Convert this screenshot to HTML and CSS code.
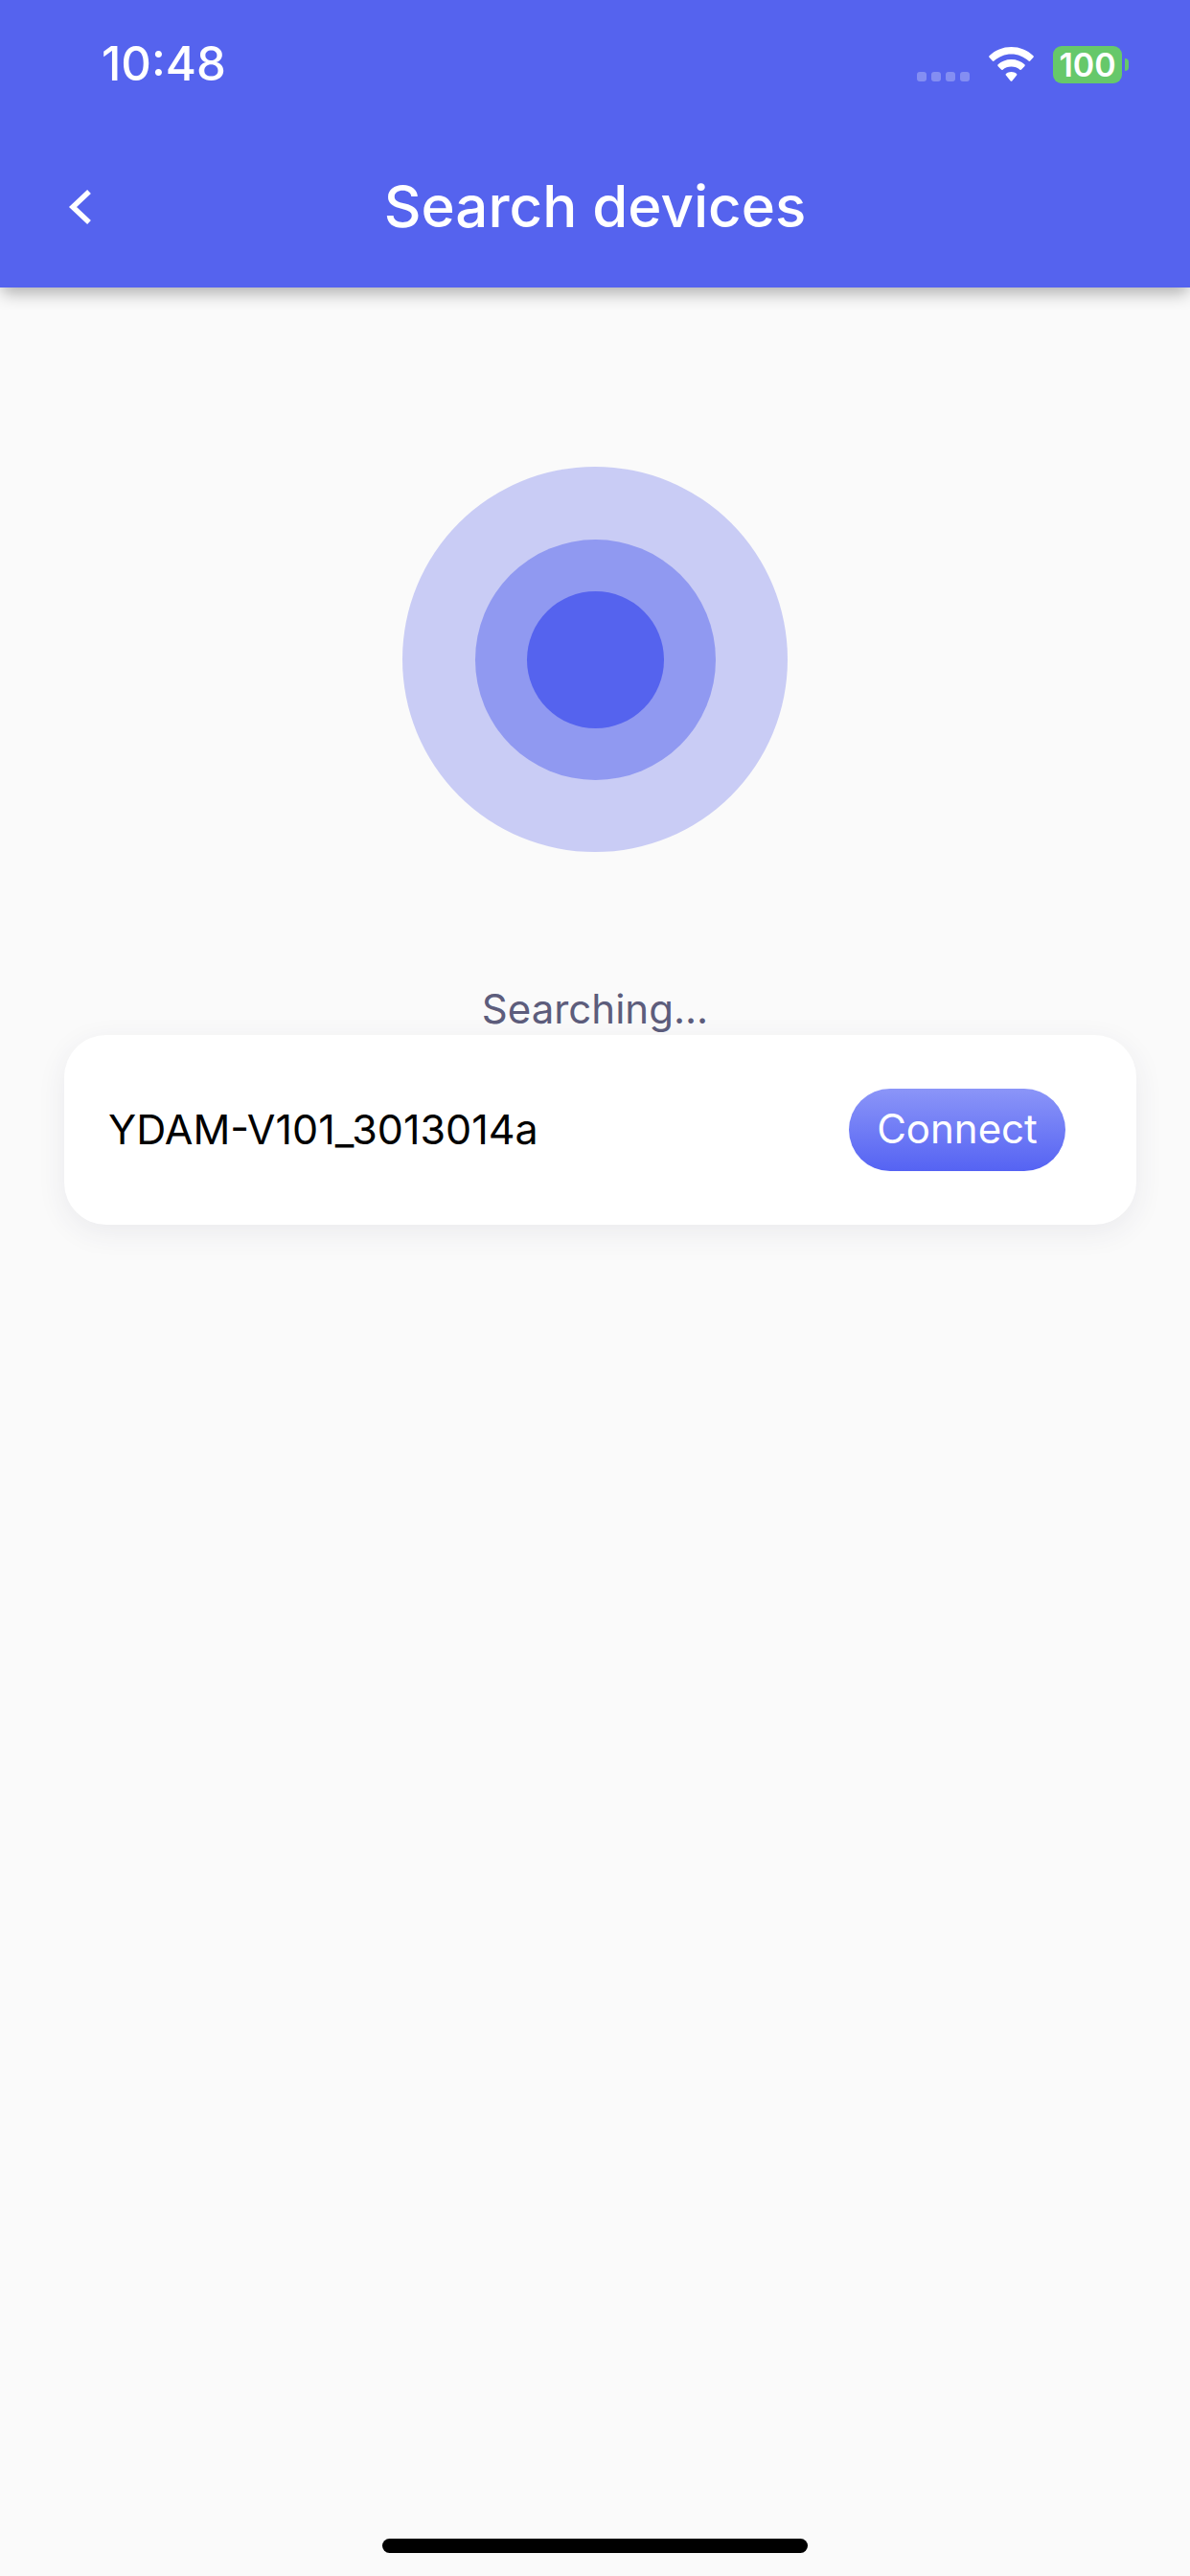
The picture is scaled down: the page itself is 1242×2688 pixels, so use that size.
FILE: index.html
```html
<!DOCTYPE html>
<html lang="en">
<head>
<meta charset="utf-8">
<title>Search devices</title>
<link rel="stylesheet" href="styles.css">
</head>
<body>
<div class="page">
  <header class="header">
    <div class="status-bar">
      <span class="time">10:48</span>
      <div class="status-icons">
        <div class="signal"><i></i><i></i><i></i><i></i></div>
        <svg class="wifi" width="47" height="36" viewBox="0 0 47 36">
          <path fill="#fff" d="M23.5 0C14.5 0 6.6 3.400 0.500 9.200C0 9.700 0 10.300 0.400 10.800L3.800 14.500C4.300 15 5 15 5.500 14.600C10.300 10.100 16.600 7.400 23.500 7.400C30.400 7.400 36.700 10.100 41.500 14.600C42 15 42.700 15 43.200 14.500L46.600 10.800C47 10.300 47 9.700 46.500 9.200C40.400 3.400 32.500 0 23.500 0Z"/>
          <path fill="#fff" d="M23.500 13C18.100 13 13.300 15 9.600 18.300C9.100 18.800 9.100 19.400 9.500 19.900L12.900 23.600C13.400 24.100 14.100 24.100 14.600 23.700C17 21.700 20.100 20.500 23.500 20.500C26.900 20.500 30 21.700 32.400 23.700C32.900 24.100 33.600 24.100 34.100 23.600L37.500 19.900C37.900 19.400 37.900 18.800 37.400 18.300C33.700 15 28.900 13 23.500 13Z"/>
          <path fill="#fff" d="M23.500 26C21.400 26 19.500 26.700 18 27.900C17.500 28.300 17.500 29 17.900 29.500L22.700 35.400C23.100 35.900 23.900 35.900 24.300 35.400L29.100 29.500C29.500 29 29.500 28.300 29 27.900C27.500 26.700 25.600 26 23.500 26Z"/>
        </svg>
        <div class="battery">
          <span class="battery-body">100</span>
          <span class="battery-nub"></span>
        </div>
      </div>
    </div>
    <div class="nav-bar">
      <svg class="back" width="28" height="40" viewBox="0 0 28 40">
        <path d="M24 4L7 20L24 36" fill="none" stroke="#fff" stroke-width="5.500"/>
      </svg>
      <h1 class="title">Search devices</h1>
    </div>
  </header>

  <main class="content">
    <div class="radar">
      <div class="ring-outer">
        <div class="ring-middle">
          <div class="ring-inner"></div>
        </div>
      </div>
    </div>
    <p class="searching">Searching...</p>
    <div class="device-card">
      <span class="device-name">YDAM-V101_3013014a</span>
      <button class="connect" type="button">Connect</button>
    </div>
  </main>

  <div class="home-bar"></div>
</div>
</body>
</html>
```

FILE: styles.css
```css
* { box-sizing: border-box; }

html, body {
  margin: 0;
  padding: 0;
  background: #fafafa;
}

body {
  font-family: Inter, "Liberation Sans", sans-serif;
}

.page {
  width: 1242px;
  height: 2688px;
  display: flex;
  flex-direction: column;
  overflow: hidden;
}

.header {
  height: 300px;
  flex: none;
  background: #5563ee;
  box-shadow: 0 8px 16px -2px rgba(0, 0, 0, 0.3);
  position: relative;
  color: #fff;
}

.status-bar {
  height: 132px;
  display: flex;
  justify-content: space-between;
  align-items: flex-start;
  padding: 38px 64px 0 106px;
}

.time {
  font-size: 49px;
  line-height: 58px;
  font-weight: 500;
}

.status-icons {
  display: flex;
  align-items: flex-start;
  padding-top: 10px;
}

.signal {
  display: flex;
  gap: 5px;
  margin-top: 27px;
  margin-right: 20px;
}

.signal i {
  width: 10px;
  height: 10px;
  border-radius: 3px;
  background: rgba(255, 255, 255, 0.28);
}

.wifi { margin-top: 1px; }

.battery {
  display: flex;
  align-items: center;
  margin-left: 20px;
}

.battery-body {
  width: 72px;
  height: 39px;
  border-radius: 9px;
  background: #66c86a;
  color: #fff;
  font-size: 34px;
  line-height: 39px;
  font-weight: 600;
  text-align: center;
}

.battery-nub {
  width: 4px;
  height: 13px;
  margin-left: 3px;
  border-radius: 0 7px 7px 0;
  background: #66c86a;
}

.nav-bar {
  height: 168px;
  display: flex;
  align-items: center;
  justify-content: center;
  position: relative;
}

.back {
  position: absolute;
  left: 69px;
  top: 64px;
}

.title {
  margin: 0;
  font-size: 60px;
  line-height: 72px;
  font-weight: 500;
  position: relative;
  top: -1px;
}

.content {
  flex: 1;
  display: flex;
  flex-direction: column;
  align-items: center;
}

.radar { margin-top: 187px; }

.ring-outer,
.ring-middle,
.ring-inner {
  border-radius: 50%;
  display: flex;
  align-items: center;
  justify-content: center;
}

.ring-outer {
  width: 402px;
  height: 402px;
  background: #c9ccf5;
}

.ring-middle {
  width: 251px;
  height: 251px;
  background: #9099f1;
}

.ring-inner {
  width: 143px;
  height: 143px;
  background: #5563ee;
}

.searching {
  margin: 0;
  margin-top: 140px;
  font-size: 42px;
  line-height: 48px;
  color: #5d5d7c;
}

.device-card {
  align-self: flex-start;
  width: 1119px;
  height: 198px;
  margin-top: 3px;
  margin-left: 67px;
  padding: 0 74px 0 46px;
  display: flex;
  align-items: center;
  justify-content: space-between;
  background: #fff;
  border-radius: 44px;
  box-shadow: 0 8px 30px rgba(50, 50, 93, 0.08);
}

.device-name {
  padding-bottom: 2px;
  font-size: 43px;
  color: #000;
}

.connect {
  width: 226px;
  height: 86px;
  padding: 0 0 3px;
  border: 0;
  border-radius: 43px;
  background: linear-gradient(180deg, #8b95f8 0%, #5563f3 100%);
  color: #fff;
  font-family: inherit;
  font-size: 42px;
}

.home-bar {
  flex: none;
  width: 444px;
  height: 15px;
  margin: 0 auto 24px;
  border-radius: 8px;
  background: #000;
}
```
